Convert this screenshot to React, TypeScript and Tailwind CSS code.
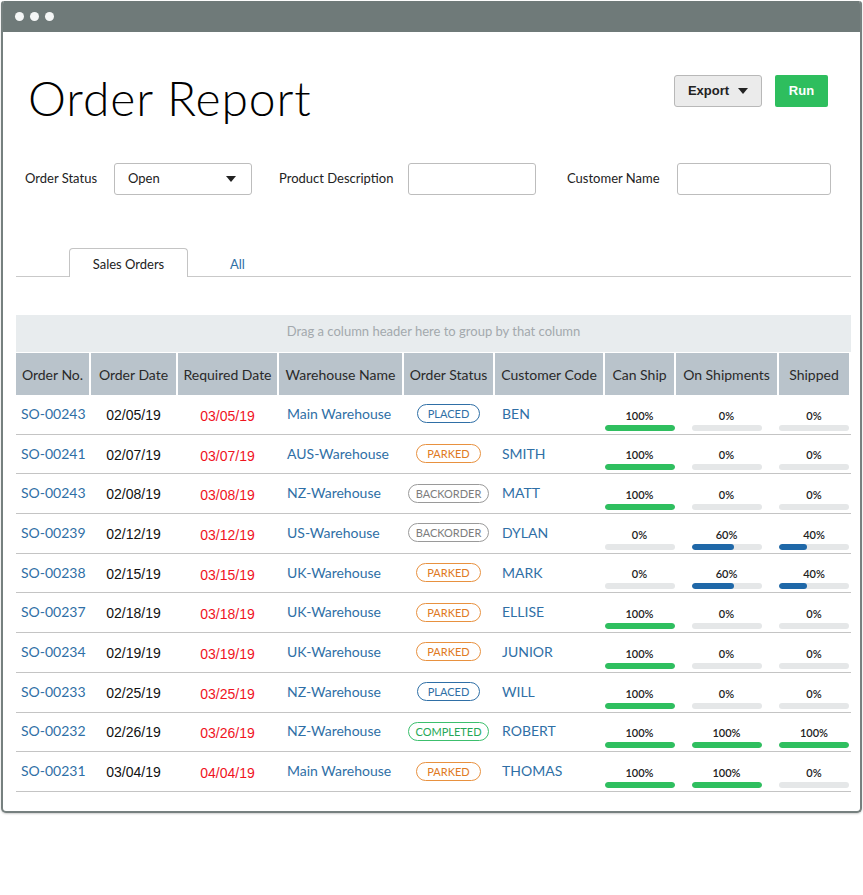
const rows = [
  { no: "SO-00243", od: "02/05/19", rd: "03/05/19", wh: "Main Warehouse", st: "PLACED", cc: "BEN", p: [100, 0, 0] },
  { no: "SO-00241", od: "02/07/19", rd: "03/07/19", wh: "AUS-Warehouse", st: "PARKED", cc: "SMITH", p: [100, 0, 0] },
  { no: "SO-00243", od: "02/08/19", rd: "03/08/19", wh: "NZ-Warehouse", st: "BACKORDER", cc: "MATT", p: [100, 0, 0] },
  { no: "SO-00239", od: "02/12/19", rd: "03/12/19", wh: "US-Warehouse", st: "BACKORDER", cc: "DYLAN", p: [0, 60, 40] },
  { no: "SO-00238", od: "02/15/19", rd: "03/15/19", wh: "UK-Warehouse", st: "PARKED", cc: "MARK", p: [0, 60, 40] },
  { no: "SO-00237", od: "02/18/19", rd: "03/18/19", wh: "UK-Warehouse", st: "PARKED", cc: "ELLISE", p: [100, 0, 0] },
  { no: "SO-00234", od: "02/19/19", rd: "03/19/19", wh: "UK-Warehouse", st: "PARKED", cc: "JUNIOR", p: [100, 0, 0] },
  { no: "SO-00233", od: "02/25/19", rd: "03/25/19", wh: "NZ-Warehouse", st: "PLACED", cc: "WILL", p: [100, 0, 0] },
  { no: "SO-00232", od: "02/26/19", rd: "03/26/19", wh: "NZ-Warehouse", st: "COMPLETED", cc: "ROBERT", p: [100, 100, 100] },
  { no: "SO-00231", od: "03/04/19", rd: "04/04/19", wh: "Main Warehouse", st: "PARKED", cc: "THOMAS", p: [100, 100, 0] },
];

const headers = [
  "Order No.",
  "Order Date",
  "Required Date",
  "Warehouse Name",
  "Order Status",
  "Customer Code",
  "Can Ship",
  "On Shipments",
  "Shipped",
];

const cols = "grid grid-cols-[73px_85px_99px_123px_89px_108px_69px_101px_70px] gap-x-[2px]";

const badgeStyles: Record<string, string> = {
  PLACED: "border-[#2f6fa6] text-[#2f6fa6] px-[10px]",
  PARKED: "border-[#e8913f] text-[#e07a22] px-[10px]",
  BACKORDER: "border-[#9a9a9a] text-[#7d7d7d] px-[7px]",
  COMPLETED: "border-[#3cbf6d] text-[#25a856] px-[6px]",
};

function Caret() {
  return (
    <svg width="10" height="6" viewBox="0 0 10 6">
      <polygon points="0,0 10,0 5,6" fill="#222" />
    </svg>
  );
}

function Percent({ value }: { value: number }) {
  const fill = value === 100 ? "bg-[#2fbf5f]" : "bg-[#1f68a8]";
  return (
    <div className="flex flex-col items-center justify-end pb-[3px]">
      <span className="text-[11px] font-semibold text-[#222] leading-none">{value}%</span>
      <div className="mt-[4px] w-[70px] h-[6px] rounded-full bg-[#e5e7e8] overflow-hidden">
        {value > 0 && <div className={`h-full rounded-full ${fill}`} style={{ width: `${value}%` }} />}
      </div>
    </div>
  );
}

export default function App() {
  return (
    <div className="w-[863px] h-[895px] bg-white font-['Lato',sans-serif] text-[#222]">
      <div className="ml-[1px] pt-[1px] w-[861px]">
        <div className="h-[812px] border-2 border-t-0 border-[#76807f] rounded-b-[5px] rounded-t-[3px] overflow-hidden flex flex-col bg-white shadow-[0_1px_2px_rgba(0,0,0,0.2)]">
          {/* title bar */}
          <div className="h-[31px] bg-[#6f7a79] flex items-center gap-[6px] pl-[12px] shrink-0">
            <span className="w-[9px] h-[9px] rounded-full bg-[#f4f6f6]" />
            <span className="w-[9px] h-[9px] rounded-full bg-[#f4f6f6]" />
            <span className="w-[9px] h-[9px] rounded-full bg-[#f4f6f6]" />
          </div>

          <div className="pl-[13px] pr-[9px]">
            {/* header */}
            <div className="flex items-start justify-between pt-[42px]">
              <h1 className="ml-[12px] text-[48px] leading-none font-light tracking-[0.9px] text-black">
                Order Report
              </h1>
              <div className="flex gap-[13px] mt-[1px] mr-[23px]">
                <button className="w-[88px] h-[32px] rounded-[3px] border border-[#b8b8b8] bg-[#ebebeb] flex items-center justify-center gap-[9px] text-[13px] font-bold text-[#222] font-['Liberation_Sans',sans-serif]">
                  Export
                  <Caret />
                </button>
                <button className="w-[53px] h-[32px] rounded-[2px] bg-[#2ebe5e] text-white text-[13px] font-bold font-['Liberation_Sans',sans-serif]">
                  Run
                </button>
              </div>
            </div>

            {/* filters */}
            <div className="flex items-center mt-[41px] h-[32px] text-[13px] text-[#222]">
              <span className="ml-[9px] w-[89px]">Order Status</span>
              <div className="w-[138px] h-[32px] border border-[#bdbdbd] rounded-[3px] flex items-center justify-between pl-[13px] pr-[15px]">
                <span>Open</span>
                <Caret />
              </div>
              <span className="ml-[27px] w-[129px]">Product Description</span>
              <div className="w-[128px] h-[32px] border border-[#bdbdbd] rounded-[3px]" />
              <span className="ml-[31px] w-[110px]">Customer Name</span>
              <div className="w-[154px] h-[32px] border border-[#bdbdbd] rounded-[3px]" />
            </div>

            {/* tabs */}
            <div className="mt-[53px] flex items-end border-b border-[#c9c9c9] h-[29px]">
              <div className="ml-[53px] w-[119px] h-[29px] -mb-px pt-[3px] bg-white border border-b-0 border-[#c4c4c4] rounded-t-[4px] flex items-center justify-center text-[13px] text-[#222]">
                Sales Orders
              </div>
              <div className="ml-[42px] h-[28px] pt-[5px] flex items-center text-[13px] text-[#2f6fa6]">All</div>
            </div>

            {/* grid */}
            <div className="mt-[38px]">
              <div className="h-[37px] pb-[3px] bg-[#e8ecee] flex items-center justify-center text-[13px] text-[#a3a9ad]">
                Drag a column header here to group by that column
              </div>
              <div className={`${cols} mt-[1px] h-[42px]`}>
                {headers.map((h) => (
                  <div key={h} className="bg-[#b9c3cb] flex items-center justify-center text-[14px] text-[#2a2a2a] whitespace-nowrap">
                    {h}
                  </div>
                ))}
              </div>
              {rows.map((r, i) => (
                <div key={i} className={`${cols} h-[39.7px] border-b border-[#c4c4c4]`}>
                  <div className="flex items-center pl-[5px] -mt-[2px] text-[14px] text-[#2f6fa6]">{r.no}</div>
                  <div className="flex items-center justify-center mt-[2px] text-[14px] text-[#111] font-['Liberation_Sans',sans-serif]">
                    {r.od}
                  </div>
                  <div className="flex items-center justify-center mt-[4px] text-[14px] text-[#f0141e] font-['Liberation_Sans',sans-serif]">
                    {r.rd}
                  </div>
                  <div className="flex items-center pl-[8px] -mt-[2px] text-[14px] text-[#2f6fa6] whitespace-nowrap">{r.wh}</div>
                  <div className="flex items-center justify-center -mt-[1px]">
                    <span className={`h-[19px] rounded-full border bg-white flex items-center text-[11px] leading-none ${badgeStyles[r.st]}`}>
                      {r.st}
                    </span>
                  </div>
                  <div className="flex items-center pl-[7px] -mt-[2px] text-[14px] text-[#2f6fa6]">{r.cc}</div>
                  <Percent value={r.p[0]} />
                  <Percent value={r.p[1]} />
                  <Percent value={r.p[2]} />
                </div>
              ))}
            </div>
          </div>
        </div>
      </div>
    </div>
  );
}
